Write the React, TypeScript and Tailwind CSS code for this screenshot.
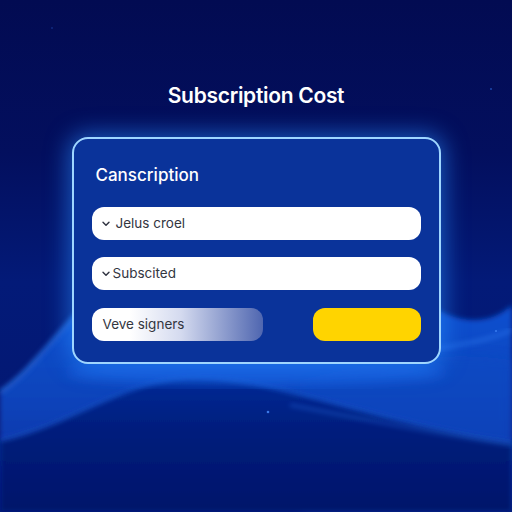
import React from "react";

function Chevron() {
  return (
    <svg width="8" height="6" viewBox="0 0 8 6" className="shrink-0">
      <path d="M1 1.2 L4 4.3 L7 1.2" fill="none" stroke="#2f3340" strokeWidth="1.4" strokeLinecap="round" strokeLinejoin="round" />
    </svg>
  );
}

function Backdrop() {
  return (
    <svg className="absolute inset-0" width="512" height="512" viewBox="0 0 512 512">
      <defs>
        <linearGradient id="sky" x1="0" y1="0" x2="0" y2="1">
          <stop offset="0" stopColor="#020b52" />
          <stop offset="0.3" stopColor="#030f5e" />
          <stop offset="0.55" stopColor="#031a78" />
          <stop offset="1" stopColor="#031770" />
        </linearGradient>
        <linearGradient id="band" x1="0" y1="0" x2="0" y2="1">
          <stop offset="0" stopColor="#0b50d0" />
          <stop offset="0.5" stopColor="#0842b8" />
          <stop offset="1" stopColor="#04249a" />
        </linearGradient>
        <linearGradient id="hill" x1="0" y1="0" x2="0" y2="1">
          <stop offset="0" stopColor="#042a96" />
          <stop offset="0.4" stopColor="#031d7c" />
          <stop offset="1" stopColor="#02146a" />
        </linearGradient>
        <filter id="soft" x="-10%" y="-10%" width="120%" height="120%">
          <feGaussianBlur stdDeviation="6" />
        </filter>
        <filter id="haze" x="-10%" y="-10%" width="120%" height="120%">
          <feGaussianBlur stdDeviation="2.5" />
        </filter>
      </defs>
      <rect width="512" height="512" fill="url(#sky)" />
      <path d="M0 392 C 30 372, 55 335, 85 305 L 430 305 C 460 325, 490 325, 512 305 L512 512 L0 512 Z" fill="url(#band)" filter="url(#haze)" />
      <path d="M300 380 C 380 360, 450 350, 512 360 L512 512 L300 512 Z" fill="#0848c2" opacity="0.5" filter="url(#soft)" />
      <path d="M0 440 C 70 425, 120 382, 185 378 C 270 374, 360 420, 512 442 L512 512 L0 512 Z" fill="url(#hill)" filter="url(#haze)" />
      <path d="M0 440 C 70 425, 120 382, 185 378 C 270 374, 360 420, 512 442" fill="none" stroke="#2a78f0" strokeWidth="3" opacity="0.45" filter="url(#haze)" />
      <path d="M85 305 C 55 335, 30 372, 0 392" fill="none" stroke="#3c8cff" strokeWidth="4" opacity="0.5" filter="url(#haze)" />
      <path d="M430 350 C 460 345, 490 340, 512 330" fill="none" stroke="#3c8cff" strokeWidth="4" opacity="0.35" filter="url(#haze)" />
      <path d="M290 405 C 370 420, 440 435, 512 445" fill="none" stroke="#2f7ff5" strokeWidth="3" opacity="0.35" filter="url(#haze)" />
      <ellipse cx="256" cy="372" rx="190" ry="14" fill="#1b6cf0" opacity="0.45" filter="url(#soft)" />
      <circle cx="268" cy="412" r="1.3" fill="#4a90ff" opacity="0.8" />
      <circle cx="496" cy="331" r="1" fill="#4a90ff" opacity="0.7" />
      <circle cx="491" cy="89" r="1" fill="#2a5fd0" opacity="0.7" />
      <circle cx="52" cy="28" r="0.8" fill="#2a5fd0" opacity="0.6" />
    </svg>
  );
}

export default function App() {
  return (
    <div
      className="relative w-[512px] h-[512px] overflow-hidden bg-[#020b52]"
      style={{ fontFamily: "Inter, 'Noto Sans', 'Liberation Sans', sans-serif" }}
    >
      <Backdrop />
      <div className="relative flex flex-col items-center pt-[84px]">
        <h1 className="text-[21px] leading-[24px] font-semibold text-white tracking-[-0.3px]">Subscription Cost</h1>
        <div className="mt-[29px] w-[369px] h-[227px] rounded-[16px] border-2 border-[#9fd6ff] bg-[#0a339a] shadow-[0_0_22px_4px_rgba(40,140,255,0.55)] px-[18px] pt-[25px] flex flex-col">
          <div className="text-[17px] leading-[22px] font-medium text-white pl-[4px]">Canscription</div>
          <div className="mt-[21px] h-[33px] rounded-[12px] bg-white flex items-center pl-[10px] gap-[6px] text-[13.5px] text-[#33363f]">
            <Chevron />
            <span>Jelus croel</span>
          </div>
          <div className="mt-[17px] h-[33px] rounded-[12px] bg-white flex items-center pl-[10px] gap-[3px] text-[13.5px] text-[#33363f]">
            <Chevron />
            <span>Subscited</span>
          </div>
          <div className="mt-[18px] flex justify-between">
            <div className="w-[171px] h-[33px] rounded-[12px] bg-[linear-gradient(to_right,#ffffff_22%,#d4daef_52%,#4f66b0_100%)] flex items-center pl-[11px] text-[13.5px] text-[#33363f]">
              Veve signers
            </div>
            <div className="w-[108px] h-[33px] rounded-[12px] bg-[#ffd400]" />
          </div>
        </div>
      </div>
    </div>
  );
}
